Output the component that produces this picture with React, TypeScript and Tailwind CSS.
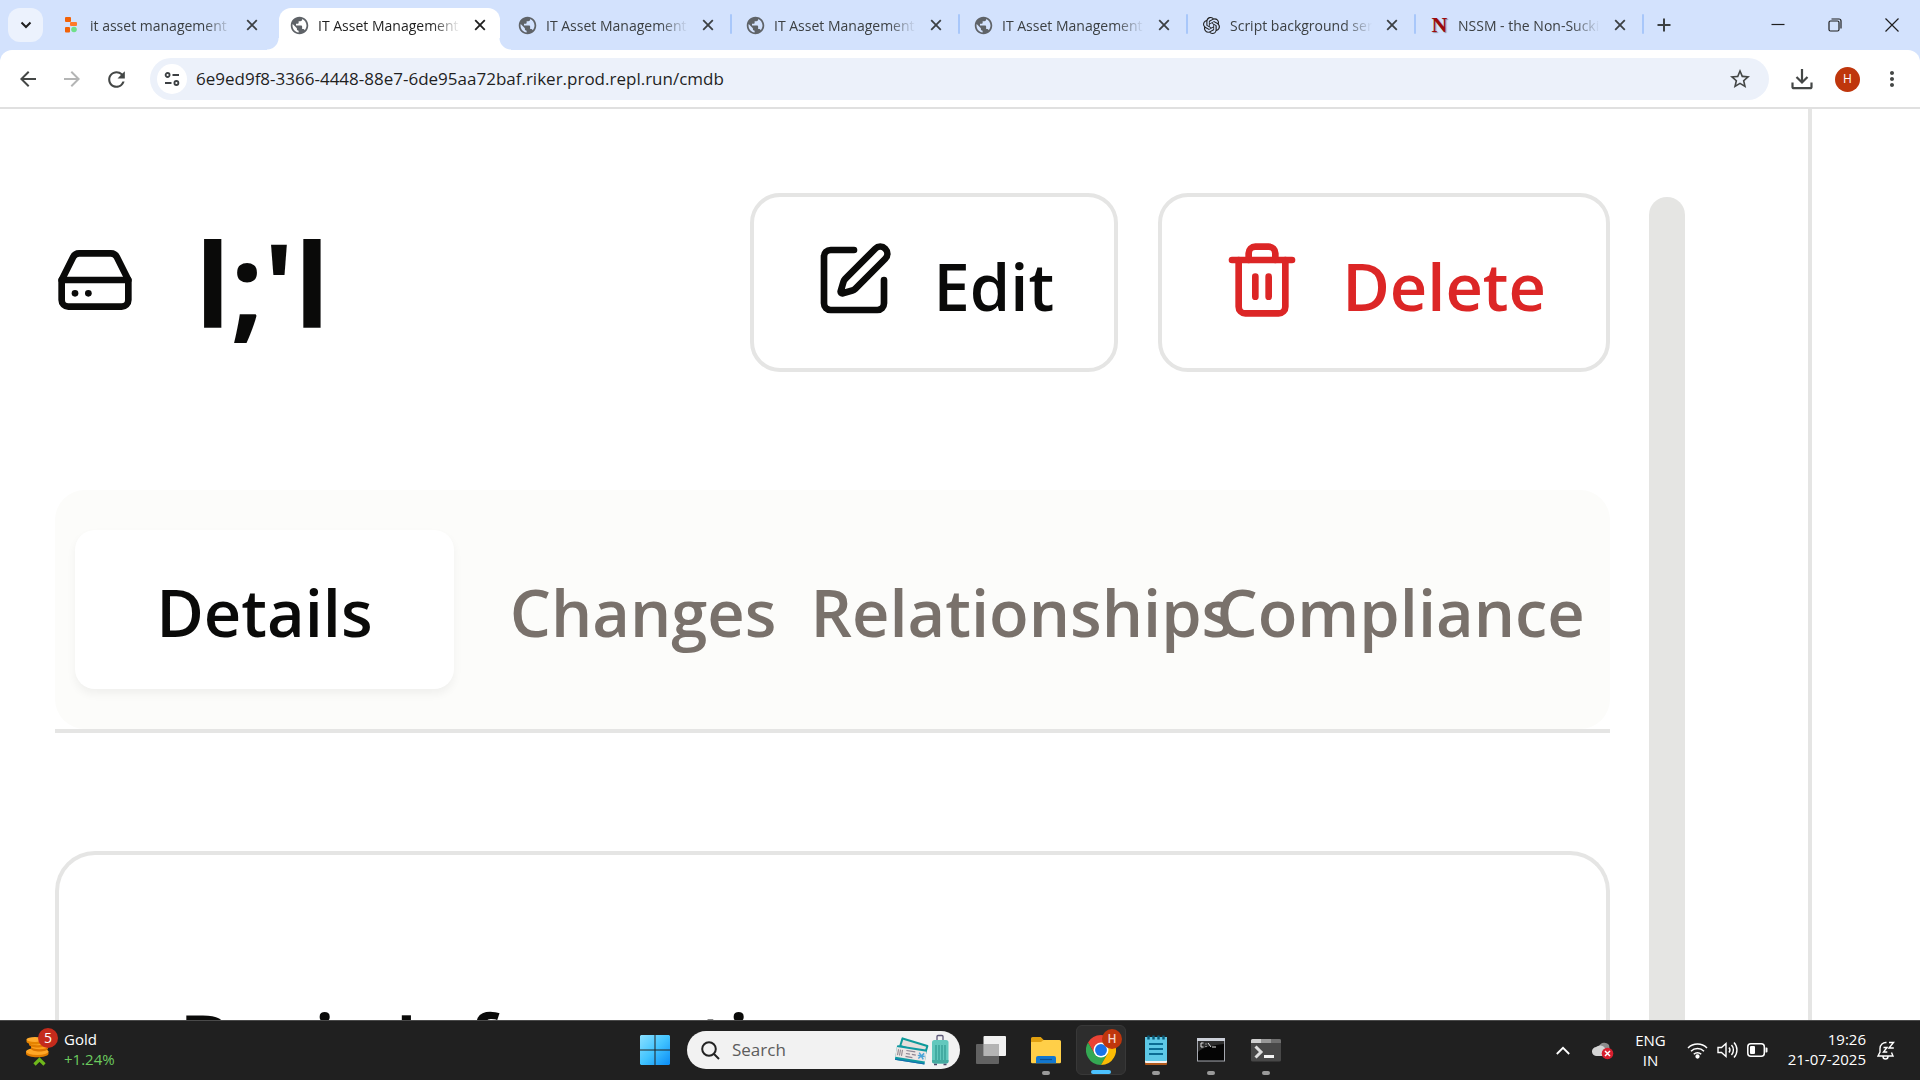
import React from "react";
import { HardDrive, SquarePen, Trash2 } from "lucide-react";
import { MdPublic, MdArrowBack, MdArrowForward, MdRefresh, MdStarBorder, MdMoreVert } from "react-icons/md";
import { SiOpenai } from "react-icons/si";

type Favicon = "replit" | "globe" | "openai" | "nssm";

interface BrowserTab {
  title: string;
  icon: Favicon;
  active?: boolean;
}

const browserTabs: BrowserTab[] = [
  { title: "it asset management", icon: "replit" },
  { title: "IT Asset Management", icon: "globe", active: true },
  { title: "IT Asset Management", icon: "globe" },
  { title: "IT Asset Management", icon: "globe" },
  { title: "IT Asset Management", icon: "globe" },
  { title: "Script background service", icon: "openai" },
  { title: "NSSM - the Non-Sucking Service Manager", icon: "nssm" },
];

function TabIcon({ icon }: { icon: Favicon }) {
  if (icon === "replit") {
    return (
      <svg viewBox="0 0 18 18" className="size-[18px]">
        <rect x="2" y="1" width="6" height="5" rx="1" fill="#f26207" />
        <rect x="7" y="6" width="7" height="4" rx="1" fill="#ff7a2b" />
        <rect x="2" y="11" width="5" height="5.500" rx="1" fill="#f26207" />
        <circle cx="11" cy="13.500" r="2.800" fill="#6fe08a" />
      </svg>
    );
  }
  if (icon === "openai") return <SiOpenai className="size-[17px] text-[#1f1f1f]" />;
  if (icon === "nssm")
    return (
      <span className="w-[18px] text-center font-['Liberation_Serif',serif] text-[22px] leading-5 font-bold text-[#9c0a0a] [text-shadow:1px_1px_1px_#8a8a9a]">
        N
      </span>
    );
  return <MdPublic className="size-[21px] text-[#5f6368]" />;
}

function CloseGlyph() {
  return (
    <svg viewBox="0 0 12 12" className="size-3" fill="none" stroke="currentColor" strokeWidth="1.800">
      <path d="M1.200 1.200l9.600 9.600M10.800 1.200l-9.600 9.600" />
    </svg>
  );
}

function TabStrip() {
  return (
    <div className="flex h-[50px] items-stretch bg-[#d3e2fd] text-[#3c4043]">
      <button aria-label="Search tabs" className="my-2 mr-[5px] ml-2 flex w-[35px] items-center justify-center rounded-xl bg-[#ecf2fd]">
        <svg viewBox="0 0 12 8" className="w-3" fill="none" stroke="#1f1f1f" strokeWidth="2">
          <path d="M1.500 1.500L6 6l4.500-4.500" />
        </svg>
      </button>
      <div className="flex min-w-0">
        {browserTabs.map((tab, i) => {
          const beforeActive = browserTabs[i + 1]?.active;
          return (
            <div key={i} className="relative flex w-[228px] min-w-0 shrink pt-2">
              {tab.active && (
                <>
                  <span className="absolute bottom-0 -left-[9px] h-3 w-3 bg-[radial-gradient(circle_at_0_0,#d3e2fd_11px,#fff_12px)]" />
                  <span className="absolute -right-[7px] bottom-0 h-3 w-3 bg-[radial-gradient(circle_at_100%_0,#d3e2fd_11px,#fff_12px)]" />
                </>
              )}
              <div
                className={
                  tab.active
                    ? "mr-1 ml-[3px] flex min-w-0 flex-1 items-center rounded-t-xl bg-white pr-[14px] pb-2 pl-[10px] text-[#1f1f1f]"
                    : "mr-1 ml-[3px] flex min-w-0 flex-1 items-center pr-[14px] pb-2 pl-[10px]"
                }
              >
                <span className="flex w-[21px] shrink-0 justify-center">
                  <TabIcon icon={tab.icon} />
                </span>
                <button className="ml-2 flex-1 overflow-hidden text-left text-[14px] whitespace-nowrap [mask-image:linear-gradient(to_right,#000_calc(100%-28px),transparent)]">
                  {tab.title}
                </button>
                <button aria-label="Close tab" className="ml-[14px] shrink-0">
                  <CloseGlyph />
                </button>
              </div>
              {!tab.active && !beforeActive && (
                <span className="absolute top-[14px] right-0 h-5 w-[2px] rounded-full bg-[#a8c7fa]" />
              )}
            </div>
          );
        })}
      </div>
      <button aria-label="New tab" className="ml-2 flex w-6 items-center justify-center">
        <svg viewBox="0 0 14 14" className="size-[14px]" stroke="#3c4043" strokeWidth="2">
          <path d="M7 0.500v13M0.500 7h13" />
        </svg>
      </button>
      <div className="ml-auto flex">
        <button aria-label="Minimize" className="flex w-[57px] items-center justify-center">
          <svg viewBox="0 0 14 14" className="size-[14px]" stroke="#1f1f1f" strokeWidth="1.200">
            <path d="M0.500 6.500h13" />
          </svg>
        </button>
        <button aria-label="Restore" className="flex w-[57px] items-center justify-center">
          <svg viewBox="0 0 14 14" className="size-[14px]" fill="none" stroke="#1f1f1f" strokeWidth="1.200">
            <rect x="1" y="3" width="10" height="10" rx="1.500" />
            <path d="M3.500 1H11a2 2 0 0 1 2 2v7.500" />
          </svg>
        </button>
        <button aria-label="Close window" className="flex w-[57px] items-center justify-center">
          <svg viewBox="0 0 14 14" className="size-[14px]" stroke="#1f1f1f" strokeWidth="1.200">
            <path d="M0.500 0.500l13 13M13.500 0.500l-13 13" />
          </svg>
        </button>
      </div>
    </div>
  );
}

function Toolbar() {
  return (
    <div className="bg-[#d3e2fd]">
      <div className="flex h-[59px] items-center rounded-t-xl border-b-2 border-[#e0e0e0] bg-white pt-px pr-4 pl-4 text-[#444746]">
        <button aria-label="Back">
          <MdArrowBack className="size-6" />
        </button>
        <button aria-label="Forward" className="ml-5 text-[#b4b5b5]">
          <MdArrowForward className="size-6" />
        </button>
        <button aria-label="Reload" className="ml-5">
          <MdRefresh className="size-[25px]" />
        </button>
        <div className="ml-[21px] flex h-[42px] flex-1 items-center rounded-full bg-[#ecf1fa] pr-[17px] pl-[7px]">
          <button aria-label="View site information" className="flex size-[30px] items-center justify-center rounded-full bg-white">
            <svg viewBox="0 0 16 16" className="size-4" fill="none" stroke="#3c4043" strokeWidth="1.800">
              <circle cx="3.600" cy="4" r="2" />
              <path d="M8.500 4h6.500M1 12h6.500" />
              <circle cx="12.400" cy="12" r="2" />
            </svg>
          </button>
          <input
            aria-label="Address and search bar"
            className="ml-[9px] min-w-0 flex-1 bg-transparent text-[17px] text-[#1f1f1f] outline-none"
            defaultValue="6e9ed9f8-3366-4448-88e7-6de95aa72baf.riker.prod.repl.run/cmdb"
          />
          <button aria-label="Bookmark this tab">
            <MdStarBorder className="size-6" />
          </button>
        </div>
        <button aria-label="Downloads" className="ml-[22px]">
          <svg viewBox="0 0 22 22" className="size-[22px]" fill="none" stroke="currentColor" strokeWidth="2.200">
            <path d="M11 1v13M5.500 9l5.500 5.500L16.500 9M1.500 14.500v4.500a1.200 1.200 0 0 0 1.200 1.200h16.600a1.200 1.200 0 0 0 1.200-1.200v-4.500" />
          </svg>
        </button>
        <button aria-label="Profile" className="ml-[22px] flex size-[25px] items-center justify-center rounded-full bg-[#bf360c] text-xs text-white">
          H
        </button>
        <button aria-label="Menu" className="ml-[20px]">
          <MdMoreVert className="size-6" />
        </button>
      </div>
    </div>
  );
}

const sections = ["Details", "Changes", "Relationships", "Compliance"];

function AssetDialog() {
  return (
    <main className="min-h-0 flex-1 overflow-hidden bg-white text-[#0a0a09]">
      <div className="mr-[108px] flex h-full gap-[39px] border-r-4 border-[#e5e5e4] pr-[123px] pl-[55px]">
        <div className="flex min-w-0 flex-1 flex-col gap-[118px] pt-[84px]">
          <header className="flex shrink-0 items-center">
            <HardDrive className="mb-[6px] size-20 shrink-0" />
            <h1 className="ml-[60px] text-[116px] leading-[120px] font-bold">l;&apos;l</h1>
            <div className="ml-auto flex gap-10">
              <button className="flex h-[179px] items-center gap-10 rounded-[30px] border-4 border-[#e5e5e4] px-[60px] text-[65px] leading-[100px] font-semibold">
                <SquarePen className="mb-[6px] size-20" />
                <span className="pt-[6px]">Edit</span>
              </button>
              <button className="flex h-[179px] items-center gap-10 rounded-[30px] border-4 border-[#e5e5e4] px-[60px] text-[65px] leading-[100px] font-semibold text-[#dc2626]">
                <Trash2 className="mb-[6px] size-20" />
                <span className="pt-[6px]">Delete</span>
              </button>
            </div>
          </header>
          <div className="shrink-0 border-b-4 border-[#e5e5e4]">
            <div role="tablist" className="grid grid-cols-4 rounded-[30px] bg-[#fcfcfa] px-5 py-10">
              {sections.map((name, i) => (
                <button
                  key={name}
                  role="tab"
                  aria-selected={i === 0}
                  className={
                    i === 0
                      ? "flex h-[159px] min-w-0 items-center justify-center rounded-[20px] bg-white pt-[4px] text-[65px] leading-[100px] font-semibold whitespace-nowrap shadow-[0_5px_10px_rgba(0,0,0,0.05)]"
                      : "flex h-[159px] min-w-0 items-center justify-center pt-[4px] text-[65px] leading-[100px] font-semibold whitespace-nowrap text-[#79716b]"
                  }
                >
                  {name}
                </button>
              ))}
            </div>
          </div>
          <section className="min-h-0 flex-1 overflow-hidden rounded-t-[40px] border-4 border-b-0 border-[#e5e5e4] px-[120px] pt-[126px]">
            <h2 className="text-[78px] leading-[120px] font-semibold whitespace-nowrap">Basic Information</h2>
          </section>
        </div>
        <div className="mt-[88px] w-9 shrink-0 rounded-t-full bg-[#e5e5e3]" />
      </div>
    </main>
  );
}

function StartIcon() {
  return (
    <svg viewBox="0 0 30 30" className="size-[30px]">
      <defs>
        <linearGradient id="win" x1="0" y1="0" x2="1" y2="1">
          <stop offset="0" stopColor="#8be0ff" />
          <stop offset="0.500" stopColor="#42c4ff" />
          <stop offset="1" stopColor="#0a8cf5" />
        </linearGradient>
      </defs>
      <path fill="url(#win)" d="M1 0h13.500v14.500H0V1zM15.500 0H29l1 1v13.500H15.500zM0 15.500h14.500V30H1l-1-1zM15.500 15.500H30V29l-1 1H15.500z" />
    </svg>
  );
}

function TravelArt() {
  return (
    <svg viewBox="0 0 54 32" className="h-8 w-[54px]">
      <g transform="rotate(17 6 6)">
        <rect x="6" y="3" width="28" height="10" rx="1" fill="#0e9a9a" />
        <rect x="8" y="5" width="24" height="6" fill="#e6dfdc" />
      </g>
      <g transform="rotate(9 2 12)">
        <rect x="2" y="11" width="30" height="15" rx="1" fill="#0f9aa2" />
        <rect x="2" y="13" width="30" height="10" fill="#ece6e4" />
        <path d="M2 25h30v1H2z" fill="#1769b0" />
        <path d="M4 15v6M6 15v6M8 15v6" stroke="#897f86" strokeWidth="1" />
        <path d="M12 15h9M12 18h4M18 18h4M12 21h7" stroke="#8c8592" strokeWidth="1.200" />
        <path d="M25 15l5 6M30 15l-5 6M24 18h7" stroke="#4aa5d8" strokeWidth="1.500" />
      </g>
      <path d="M42 7V2.500a1 1 0 0 1 1-1h4a1 1 0 0 1 1 1V7" fill="none" stroke="#5d5878" strokeWidth="1.300" />
      <rect x="37" y="6" width="16.500" height="23.500" rx="2.500" fill="#62c8bd" />
      <path d="M41 11v15M44 11v15M47 11v15M50 11v15" stroke="#2f9990" strokeWidth="1.200" />
      <path d="M37 26h16.500v1a2.500 2.500 0 0 1-2.500 2.500H39.500A2.500 2.500 0 0 1 37 27z" fill="#44aaa0" />
      <path d="M39 30.500h3M48.500 30.500h3" stroke="#4a4668" strokeWidth="1.600" />
    </svg>
  );
}

function TaskViewIcon() {
  return (
    <svg viewBox="0 0 30 30" className="size-[30px]">
      <rect x="7.500" y="1" width="22.500" height="20" rx="1" fill="#f1f1f1" />
      <rect x="0" y="9" width="23" height="20" rx="1" fill="#6e6e6e" opacity="0.850" />
      <path d="M7.500 9H23v12H7.500z" fill="#b4b4b4" />
    </svg>
  );
}

function FolderIcon() {
  return (
    <svg viewBox="0 0 30 30" className="size-[30px]">
      <path d="M0 3.500A1.500 1.500 0 0 1 1.500 2h8.200l3 3v4H0z" fill="#e0a010" />
      <path d="M0 7h10l2.500-2H28.500A1.500 1.500 0 0 1 30 6.500V27a1.200 1.200 0 0 1-1.200 1.200H1.200A1.200 1.200 0 0 1 0 27z" fill="#ffcf48" />
      <path d="M5 28.200V23a2 2 0 0 1 2-2h16a2 2 0 0 1 2 2v5.200z" fill="#1277cf" />
      <path d="M9 24.500h12" stroke="#0b4f92" strokeWidth="1.200" />
    </svg>
  );
}

function ChromeIcon() {
  return (
    <svg viewBox="0 0 48 48" className="size-[30px]">
      <path fill="#ea4335" d="M24 0A24 24 0 0 0 3.200 12l10.400 18L24 12h20.800A24 24 0 0 0 24 0z" />
      <path fill="#34a853" d="M3.200 12A24 24 0 0 0 24 48l10.400-18H13.600z" />
      <path fill="#fbbc04" d="M44.800 12H24l10.400 18L24 48A24 24 0 0 0 44.800 12z" />
      <circle cx="24" cy="24" r="12" fill="#fff" />
      <circle cx="24" cy="24" r="9.500" fill="#1a73e8" />
    </svg>
  );
}

function NotepadIcon() {
  return (
    <svg viewBox="0 0 22 30" className="h-[30px] w-[22px]">
      <rect x="0" y="24" width="22" height="6" rx="1" fill="#b25a1c" />
      <rect x="0" y="2" width="22" height="26" rx="1" fill="#f2f2f2" />
      <rect x="0" y="2" width="22" height="24" rx="1" fill="#5dc8e6" />
      <path d="M4 9h14M4 14h14M4 19h14" stroke="#0b6c94" strokeWidth="1.800" />
      <path d="M3.500 0.500v4M8.500 0.500v4M13.500 0.500v4M18.500 0.500v4" stroke="#0b5b78" strokeWidth="2.400" />
    </svg>
  );
}

function CommandIcon() {
  return (
    <svg viewBox="0 0 28 24" className="h-6 w-7">
      <rect x="0.500" y="0.500" width="27" height="22.500" fill="#050505" stroke="#a5a8b0" />
      <path d="M0 0h28v3H0z" fill="#ccd0d9" />
      <path d="M1 3h26v3C16 7 6 9 1 14z" fill="#2e2e2e" />
      <path d="M6.500 5H4v4h2.500M9 5.500v1M9 8v1M11 5l3 4M15 9h4" stroke="#e0e0e0" fill="none" />
    </svg>
  );
}

function TerminalIcon() {
  return (
    <svg viewBox="0 0 30 23" className="h-[23px] w-[30px]">
      <rect width="30" height="22.500" rx="1.500" fill="#484848" />
      <path d="M1.500 0H10v4H0V1.500A1.500 1.500 0 0 1 1.500 0z" fill="#cfcfcf" />
      <path d="M10 0h10v4H10z" fill="#989898" />
      <path d="M20 0h8.500A1.500 1.500 0 0 1 30 1.500V4H20z" fill="#6f6f6f" />
      <path d="M4.500 7.500l5.500 5.500-5.500 5.500" stroke="#dedede" strokeWidth="3" fill="none" />
      <path d="M13 17.500h10" stroke="#f4f4f4" strokeWidth="3" />
    </svg>
  );
}

function CoinsIcon() {
  return (
    <svg viewBox="0 0 24 30" className="h-[30px] w-6">
      <path d="M0 15.500h22.500v2c0 5-22.500 5-22.500 0z" fill="#e07b00" />
      <ellipse cx="11.250" cy="15.500" rx="11.250" ry="3.500" fill="#ffa726" />
      <path d="M5 10.500h17v2c0 4-17 4-17 0z" fill="#d97400" />
      <ellipse cx="13.500" cy="10.500" rx="8.500" ry="2.800" fill="#ff9f1c" />
      <path d="M3 6.500h17v2c0 4-17 4-17 0z" fill="#e07b00" />
      <ellipse cx="11.500" cy="6.500" rx="8.500" ry="2.800" fill="#ffa726" />
      <path d="M0.500 3.500h17v2c0 4-17 4-17 0z" fill="#e58300" />
      <ellipse cx="9" cy="3.500" rx="8.500" ry="2.600" fill="#ffab2e" />
      <path d="M8.500 28.500l5-5 5 5" stroke="#6fb81b" strokeWidth="3.200" fill="none" />
    </svg>
  );
}

interface TaskApp {
  name: string;
  icon: React.ReactNode;
  state: "none" | "open" | "focused";
}

const apps: TaskApp[] = [
  { name: "Task view", icon: <TaskViewIcon />, state: "none" },
  { name: "File Explorer", icon: <FolderIcon />, state: "open" },
  { name: "Google Chrome", icon: <ChromeIcon />, state: "focused" },
  { name: "Notepad", icon: <NotepadIcon />, state: "open" },
  { name: "Command Prompt", icon: <CommandIcon />, state: "open" },
  { name: "Terminal", icon: <TerminalIcon />, state: "open" },
];

function Taskbar() {
  return (
    <footer className="flex h-[60px] shrink-0 items-center border-t border-[#4a4a4a] bg-[#202020] pb-px text-[15px] leading-5 text-white">
      <div className="flex flex-1 items-center pl-[26px]">
        <button className="flex items-center gap-[6px] pb-[2px] text-left">
          <span className="relative flex h-10 w-8 items-center pt-1">
            <CoinsIcon />
            <span className="absolute -top-px right-0 flex size-5 items-center justify-center rounded-full bg-[#c42b1c] text-sm">5</span>
          </span>
          <span>
            <span className="block">Gold</span>
            <span className="block text-[#6ccb5f]">+1.24%</span>
          </span>
        </button>
      </div>
      <div className="flex items-center gap-[5px]">
        <button aria-label="Start" className="flex size-[50px] items-center justify-center">
          <StartIcon />
        </button>
        <label className="mr-px ml-[2px] flex h-[38px] w-[273px] items-center rounded-full bg-[#f2f2f2] pr-[11px] pl-[14px]">
          <svg viewBox="0 0 19 19" className="size-[19px] shrink-0" fill="none" stroke="#222" strokeWidth="2">
            <circle cx="8" cy="8" r="6.800" />
            <path d="M13 13l5 5" />
          </svg>
          <input
            aria-label="Search"
            placeholder="Search"
            className="ml-3 w-full min-w-0 flex-1 bg-transparent text-[17px] text-[#1f1f1f] outline-none placeholder:text-[#5c5c5c]"
          />
          <TravelArt />
        </label>
        {apps.map((app) => (
          <button
            key={app.name}
            aria-label={app.name}
            className={
              app.state === "focused"
                ? "relative flex size-[50px] items-center justify-center rounded-md border border-[#383838] bg-[#2d2d2d]"
                : "relative flex size-[50px] items-center justify-center"
            }
          >
            {app.icon}
            {app.state === "focused" && (
              <>
                <span className="absolute top-[3px] right-[3px] flex size-5 items-center justify-center rounded-full bg-[#bf360c] text-xs font-semibold text-[#f6d5c8]">
                  H
                </span>
                <span className="absolute bottom-0 h-1 w-5 rounded-full bg-[#4cc2ff]" />
              </>
            )}
            {app.state === "open" && <span className="absolute bottom-0 h-1 w-2 rounded-full bg-[#9a9a9a]" />}
          </button>
        ))}
      </div>
      <div className="flex flex-1 items-center justify-end pr-[25px]">
        <button aria-label="Show hidden icons">
          <svg viewBox="0 0 14 9" className="w-[14px]" fill="none" stroke="#fff" strokeWidth="1.800">
            <path d="M0.800 8L7 1.800 13.200 8" />
          </svg>
        </button>
        <button aria-label="OneDrive" className="ml-[22px]">
          <svg viewBox="0 0 22 20" className="h-5 w-[22px]">
            <path d="M7 6a6 6 0 0 1 10-1l1 6H6z" fill="#8c8c8c" />
            <path d="M5 16a4.500 4.500 0 0 1-1-9 6 6 0 0 1 9 1l4 8z" fill="#d4d4d4" />
            <circle cx="15.500" cy="13.500" r="5.800" fill="#d81f2e" />
            <path d="M13 11l5 5M18 11l-5 5" stroke="#fff" strokeWidth="1.500" />
          </svg>
        </button>
        <button className="ml-[21px] text-center">
          <span className="block">ENG</span>
          <span className="block">IN</span>
        </button>
        <button aria-label="Network, volume and battery" className="ml-[21px] flex items-center gap-[9px]">
          <svg viewBox="0 0 21 18" className="h-[18px] w-[21px]" fill="none" stroke="#fff" strokeWidth="1.500">
            <path d="M1 7a13.500 13.500 0 0 1 19 0M4 10.200a9.200 9.200 0 0 1 13 0M6.800 13.200a5.200 5.200 0 0 1 7.400 0" />
            <circle cx="10.500" cy="15.500" r="1.400" fill="#fff" />
          </svg>
          <svg viewBox="0 0 21 18" className="h-[18px] w-[21px]" fill="none" stroke="#fff" strokeWidth="1.400">
            <path d="M1 6.500h3.500L9 2.500v13l-4.500-4H1zM12 6.500a4 4 0 0 1 0 5M14.500 4a7.500 7.500 0 0 1 0 10M17 1.500a11 11 0 0 1 0 15" />
          </svg>
          <svg viewBox="0 0 21 14" className="h-[14px] w-[21px]">
            <rect x="0.800" y="0.800" width="16.500" height="12.400" rx="3" fill="none" stroke="#fff" strokeWidth="1.500" />
            <rect x="3" y="3" width="5" height="8" rx="1" fill="#fff" />
            <path d="M18.500 4.500h1a1 1 0 0 1 1 1v3a1 1 0 0 1-1 1h-1z" fill="#fff" />
          </svg>
        </button>
        <button className="ml-5 pb-[2px] text-right">
          <time className="block">19:26</time>
          <time className="block">21-07-2025</time>
        </button>
        <button aria-label="Notifications" className="ml-[11px]">
          <svg viewBox="0 0 18 19" className="h-[19px] w-[18px]" fill="none" stroke="#fff" strokeWidth="1.400">
            <path d="M9.500 1.500A6 6 0 0 0 3 7.500V11l-2 4h15l-1.500-3.500M6 15.500a2.500 2.500 0 0 0 5 0" />
            <path d="M12 1.500h4.500L12 7h4.800M6.500 6.500h3.500L6.500 11h3.800" />
          </svg>
        </button>
      </div>
    </footer>
  );
}

export default function App() {
  return (
    <div className="flex h-screen flex-col overflow-hidden bg-white font-['Open_Sans','Noto_Sans',sans-serif]">
      <TabStrip />
      <Toolbar />
      <AssetDialog />
      <Taskbar />
    </div>
  );
}
